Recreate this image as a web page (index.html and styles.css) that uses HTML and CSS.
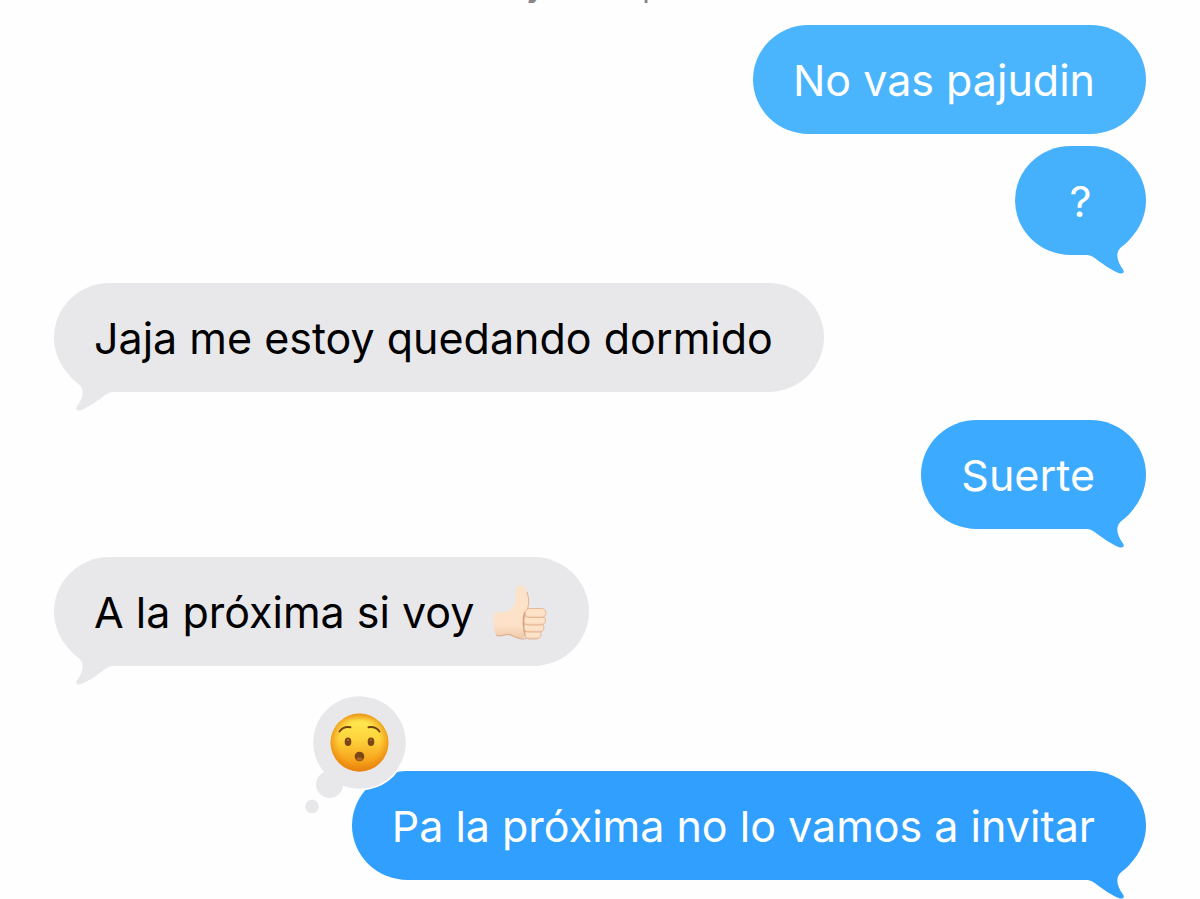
FILE: index.html
```
<!DOCTYPE html>
<html lang="es">
<head>
<meta charset="utf-8">
<meta name="viewport" content="width=device-width, initial-scale=1">
<title>Mensajes</title>
<link rel="stylesheet" href="styles.css">
</head>
<body>
<svg class="defs" width="0" height="0" aria-hidden="true">
  <symbol id="tail" viewBox="0 0 64 50">
    <path d="M0 0V29L5 30C10 30 14 34 18 37C25 42 33 47 38 48.500C42 49 42.500 46.500 41 44.500C38 40 35.500 36 35.300 30C35.500 26 37.500 23.500 40 21.500C45 18 48.500 14 52 8.500L44 0Z"/>
  </symbol>
</svg>
<main class="chat">
  <div class="stamp-clip"><time class="stamp"><b>Hoy</b> 10:48 p. m.</time></div>

  <p class="bubble sent tone-1">No vas pajudin</p>
  <p class="bubble sent short follow tone-2">?<svg class="tail" aria-hidden="true"><use href="#tail"/></svg></p>
  <p class="bubble received">Jaja me estoy quedando dormido<svg class="tail" aria-hidden="true"><use href="#tail"/></svg></p>
  <p class="bubble sent tone-3">Suerte<svg class="tail" aria-hidden="true"><use href="#tail"/></svg></p>
  <p class="bubble received with-emoji"><span>A la próxima si voy</span>
    <svg class="thumb" viewBox="0 0 54 56" role="img" aria-label="Pulgar arriba">
      <defs>
        <linearGradient id="skin" x1="0" y1="0" x2="0" y2="1">
          <stop offset="0" stop-color="#fbe2c6"/><stop offset=".75" stop-color="#fde2c9"/><stop offset="1" stop-color="#f0c9a8"/>
        </linearGradient>
      </defs>
      <path d="M2 27C7 28 14 27 17 25C21 22 23 17 23.500 13C22.500 8 22.500 3 26 1C30 -1 33 3 34 7C36 13 36 19 34.500 25L33 46C33 53 30 54 25 53C20 52 16 49 12 50C8 51 4 52 3 50C0 44 0 34 2 27Z" fill="url(#skin)"/>
      <path d="M34 7C36 13 36.500 19 34 25" fill="none" stroke="#dfb08e" stroke-width="1"/>
      <path d="M3 50C7 53 12 48 18 50C25 54 31 55 34 53" fill="none" stroke="#dba884" stroke-width="1"/>
      <path d="M32 27C29 35 31 45 33 52" fill="none" stroke="#d8a582" stroke-width="2"/>
      <g fill="url(#skin)" stroke="#dfac88" stroke-width=".8">
        <rect x="32" y="44" width="16" height="10" rx="4.500"/>
        <rect x="31" y="38" width="20" height="9" rx="4.500"/>
        <rect x="31" y="31" width="21.500" height="9" rx="4.500"/>
        <rect x="32" y="23.500" width="21" height="9" rx="4.500"/>
      </g>
    </svg>
    <svg class="tail" aria-hidden="true"><use href="#tail"/></svg></p>
  <p class="bubble sent reacted tone-4">Pa la próxima no lo vamos a invitar<svg class="tail" aria-hidden="true"><use href="#tail"/></svg>
    <svg class="reaction" viewBox="298 694 106 122" role="img" aria-label="Reacción: cara sorprendida">
      <defs>
        <linearGradient id="face" x1="0" y1="0" x2="0" y2="1">
          <stop offset="0" stop-color="#f7bd2c"/><stop offset=".12" stop-color="#fee94f"/><stop offset=".45" stop-color="#fed33b"/><stop offset=".8" stop-color="#f7a51d"/><stop offset="1" stop-color="#e9870f"/>
        </linearGradient>
        <radialGradient id="shade">
          <stop offset=".7" stop-color="#f08a12" stop-opacity="0"/><stop offset="1" stop-color="#e57f0d" stop-opacity=".65"/>
        </radialGradient>
      </defs>
      <circle cx="354.500" cy="742.500" r="48" fill="#fff"/>
      <g fill="#e8e8eb">
        <circle cx="354.500" cy="742.500" r="46.300"/>
        <circle cx="324.500" cy="784.500" r="13.500"/>
        <circle cx="307" cy="806.500" r="6.800"/>
      </g>
      <circle cx="354.500" cy="742.500" r="29" fill="url(#face)"/>
      <circle cx="354.500" cy="742.500" r="29" fill="url(#shade)"/>
      <g fill="none" stroke="#71410f" stroke-width="1.900" stroke-linecap="round">
        <path d="M334.500 731.500C337 728 341 726.500 345.500 727.300"/>
        <path d="M374.500 731.500C372 728 368 726.500 363.500 727.300"/>
      </g>
      <g fill="#7a4614">
        <ellipse cx="343" cy="741.800" rx="3.300" ry="4.300"/>
        <ellipse cx="366" cy="741.800" rx="3.300" ry="4.300"/>
        <ellipse cx="354.500" cy="756.500" rx="4.800" ry="4.800"/>
      </g>
      <ellipse cx="354.500" cy="759" rx="3" ry="1.800" fill="#a96320"/>
      <g fill="#a77236"><circle cx="343" cy="740" r="1"/><circle cx="366" cy="740" r="1"/></g>
    </svg></p>
</main>
</body>
</html>
```
FILE: styles.css
```
* {
  box-sizing: border-box;
}

body {
  margin: 0;
  background: #fefefe;
  color: #000;
  font-family: Inter, "Liberation Sans", sans-serif;
}

.defs {
  position: absolute;
}

.chat {
  display: flex;
  flex-direction: column;
  padding: 0 54px 19px;
  overflow: hidden;
}

/* The date line is scrolled almost out of view. */
.stamp-clip {
  display: flex;
  flex-direction: column;
  justify-content: flex-end;
  height: 3px;
  margin-bottom: -6px;
  overflow: hidden;
}

.stamp {
  color: #85858a;
  font-size: 31px;
  line-height: 34px;
  text-align: center;
}

.stamp b {
  font-weight: 600;
}

.bubble {
  --fill: #e8e8eb;
  position: relative;
  margin: 28px 0 0;
  padding: 29px 51px 27px 40px;
  border-radius: 56px / 55px;
  background: var(--fill);
  font-size: 43px;
  line-height: 53px;
}

.sent {
  align-self: flex-end;
  color: #fff;
}

.received {
  align-self: flex-start;
}

.short {
  min-width: 131px;
  padding-right: 40px;
  padding-left: 40px;
  text-align: center;
}

.follow {
  margin-top: 12px;
}

.reacted {
  margin-top: 105px;
}

.with-emoji {
  display: flex;
  align-items: center;
  gap: 19px;
  padding-right: 42px;
}

.tone-1 { --fill: #4ab5fd; }
.tone-2 { --fill: #45b1fd; }
.tone-3 { --fill: #3caafe; }
.tone-4 { --fill: #309ffe; }

.tail {
  position: absolute;
  right: 0;
  bottom: -20px;
  width: 64px;
  height: 50px;
  fill: var(--fill);
}

.received .tail {
  right: auto;
  left: 0;
  transform: scaleX(-1);
}

.thumb {
  width: 54px;
  height: 56px;
  margin: -2px 0;
}

.reaction {
  position: absolute;
  top: -77px;
  left: -49px;
  width: 106px;
  height: 122px;
}
```
